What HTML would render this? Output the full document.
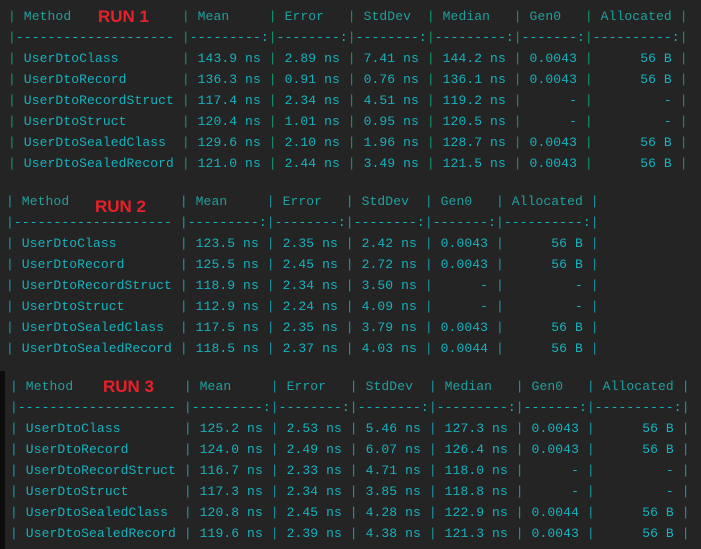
<!DOCTYPE html>
<html><head><meta charset="utf-8"><style>
body{margin:0;width:701px;height:549px;background:#242424;overflow:hidden;position:relative}
pre{position:absolute;margin:0;font-family:"Liberation Mono",monospace;font-size:13px;letter-spacing:0.1px;line-height:21px;color:#16b2be}
pre i{font-style:normal;color:#1b9aa6}
pre.g i{color:#0e9a6c}
.h{color:#1fa09e}
.r{position:absolute;font-family:"Liberation Sans",sans-serif;font-weight:bold;font-size:17px;color:#e8202a}
.blk{position:absolute;left:0;top:371px;width:5px;height:178px;background:#0c0c0c}
</style></head><body>
<pre class="g" style="left:8px;top:6px"><span class="h"><i>|</i> Method              <i>|</i> Mean     <i>|</i> Error   <i>|</i> StdDev  <i>|</i> Median   <i>|</i> Gen0   <i>|</i> Allocated <i>|</i></span>
<i>|</i>-------------------- <i>|</i>---------:<i>|</i>--------:<i>|</i>--------:<i>|</i>---------:<i>|</i>-------:<i>|</i>----------:<i>|</i>
<i>|</i> UserDtoClass        <i>|</i> 143.9 ns <i>|</i> 2.89 ns <i>|</i> 7.41 ns <i>|</i> 144.2 ns <i>|</i> 0.0043 <i>|</i>      56 B <i>|</i>
<i>|</i> UserDtoRecord       <i>|</i> 136.3 ns <i>|</i> 0.91 ns <i>|</i> 0.76 ns <i>|</i> 136.1 ns <i>|</i> 0.0043 <i>|</i>      56 B <i>|</i>
<i>|</i> UserDtoRecordStruct <i>|</i> 117.4 ns <i>|</i> 2.34 ns <i>|</i> 4.51 ns <i>|</i> 119.2 ns <i>|</i>      - <i>|</i>         - <i>|</i>
<i>|</i> UserDtoStruct       <i>|</i> 120.4 ns <i>|</i> 1.01 ns <i>|</i> 0.95 ns <i>|</i> 120.5 ns <i>|</i>      - <i>|</i>         - <i>|</i>
<i>|</i> UserDtoSealedClass  <i>|</i> 129.6 ns <i>|</i> 2.10 ns <i>|</i> 1.96 ns <i>|</i> 128.7 ns <i>|</i> 0.0043 <i>|</i>      56 B <i>|</i>
<i>|</i> UserDtoSealedRecord <i>|</i> 121.0 ns <i>|</i> 2.44 ns <i>|</i> 3.49 ns <i>|</i> 121.5 ns <i>|</i> 0.0043 <i>|</i>      56 B <i>|</i></pre>
<div class="r" style="left:98px;top:7px">RUN 1</div>

<pre style="left:6px;top:191px"><span class="h"><i>|</i> Method              <i>|</i> Mean     <i>|</i> Error   <i>|</i> StdDev  <i>|</i> Gen0   <i>|</i> Allocated <i>|</i></span>
<i>|</i>-------------------- <i>|</i>---------:<i>|</i>--------:<i>|</i>--------:<i>|</i>-------:<i>|</i>----------:<i>|</i>
<i>|</i> UserDtoClass        <i>|</i> 123.5 ns <i>|</i> 2.35 ns <i>|</i> 2.42 ns <i>|</i> 0.0043 <i>|</i>      56 B <i>|</i>
<i>|</i> UserDtoRecord       <i>|</i> 125.5 ns <i>|</i> 2.45 ns <i>|</i> 2.72 ns <i>|</i> 0.0043 <i>|</i>      56 B <i>|</i>
<i>|</i> UserDtoRecordStruct <i>|</i> 118.9 ns <i>|</i> 2.34 ns <i>|</i> 3.50 ns <i>|</i>      - <i>|</i>         - <i>|</i>
<i>|</i> UserDtoStruct       <i>|</i> 112.9 ns <i>|</i> 2.24 ns <i>|</i> 4.09 ns <i>|</i>      - <i>|</i>         - <i>|</i>
<i>|</i> UserDtoSealedClass  <i>|</i> 117.5 ns <i>|</i> 2.35 ns <i>|</i> 3.79 ns <i>|</i> 0.0043 <i>|</i>      56 B <i>|</i>
<i>|</i> UserDtoSealedRecord <i>|</i> 118.5 ns <i>|</i> 2.37 ns <i>|</i> 4.03 ns <i>|</i> 0.0044 <i>|</i>      56 B <i>|</i></pre>
<div class="r" style="left:95px;top:197px">RUN 2</div>

<div class="blk"></div>
<pre style="left:10px;top:376px"><span class="h"><i>|</i> Method              <i>|</i> Mean     <i>|</i> Error   <i>|</i> StdDev  <i>|</i> Median   <i>|</i> Gen0   <i>|</i> Allocated <i>|</i></span>
<i>|</i>-------------------- <i>|</i>---------:<i>|</i>--------:<i>|</i>--------:<i>|</i>---------:<i>|</i>-------:<i>|</i>----------:<i>|</i>
<i>|</i> UserDtoClass        <i>|</i> 125.2 ns <i>|</i> 2.53 ns <i>|</i> 5.46 ns <i>|</i> 127.3 ns <i>|</i> 0.0043 <i>|</i>      56 B <i>|</i>
<i>|</i> UserDtoRecord       <i>|</i> 124.0 ns <i>|</i> 2.49 ns <i>|</i> 6.07 ns <i>|</i> 126.4 ns <i>|</i> 0.0043 <i>|</i>      56 B <i>|</i>
<i>|</i> UserDtoRecordStruct <i>|</i> 116.7 ns <i>|</i> 2.33 ns <i>|</i> 4.71 ns <i>|</i> 118.0 ns <i>|</i>      - <i>|</i>         - <i>|</i>
<i>|</i> UserDtoStruct       <i>|</i> 117.3 ns <i>|</i> 2.34 ns <i>|</i> 3.85 ns <i>|</i> 118.8 ns <i>|</i>      - <i>|</i>         - <i>|</i>
<i>|</i> UserDtoSealedClass  <i>|</i> 120.8 ns <i>|</i> 2.45 ns <i>|</i> 4.28 ns <i>|</i> 122.9 ns <i>|</i> 0.0044 <i>|</i>      56 B <i>|</i>
<i>|</i> UserDtoSealedRecord <i>|</i> 119.6 ns <i>|</i> 2.39 ns <i>|</i> 4.38 ns <i>|</i> 121.3 ns <i>|</i> 0.0043 <i>|</i>      56 B <i>|</i></pre>
<div class="r" style="left:103px;top:377px">RUN 3</div>
</body></html>
